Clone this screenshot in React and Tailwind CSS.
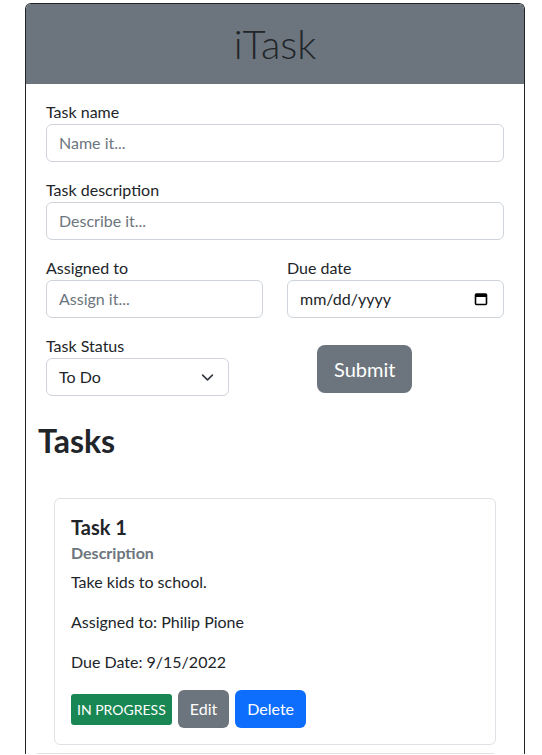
import React from 'react';

const font = { fontFamily: 'Lato, "Noto Sans", sans-serif' };

const Field = ({ label, placeholder }) => (
  <div>
    <label className="block h-[24px] text-[16px] leading-[24px] text-[#212529]">{label}</label>
    <div className="h-[38px] border border-[#ced4da] rounded-[6px] px-[12px] flex items-center text-[16px] text-[#6c757d] bg-white">
      {placeholder}
    </div>
  </div>
);

const App = () => {
  return (
    <div className="h-[755px] overflow-hidden bg-white pt-[3px]" style={font}>
      <div className="ml-[25px] w-[500px] border border-b-0 border-[#212529] rounded-t-[6px] overflow-hidden">
        {/* Header */}
        <div className="h-[80px] bg-[#6c757d] flex items-center justify-center">
          <h1 className="text-[40px] font-light text-[#212529] leading-none">iTask</h1>
        </div>

        {/* Form */}
        <div className="px-[20px] pt-[16px]">
          <div className="mb-[16px]">
            <Field label="Task name" placeholder="Name it..." />
          </div>
          <div className="mb-[16px]">
            <Field label="Task description" placeholder="Describe it..." />
          </div>
          <div className="grid grid-cols-2 gap-x-[24px] mb-[16px]">
            <Field label="Assigned to" placeholder="Assign it..." />
            <div>
              <label className="block h-[24px] text-[16px] leading-[24px] text-[#212529]">Due date</label>
              <div className="h-[38px] border border-[#ced4da] rounded-[6px] pl-[12px] pr-[15px] flex items-center justify-between text-[16px] text-[#212529]">
                <span>mm/dd/yyyy</span>
                <svg width="14" height="14" viewBox="0 0 14 14">
                  <rect x="1.5" y="2" width="11" height="10.5" rx="1" fill="none" stroke="#000" strokeWidth="1.6" />
                  <rect x="1.5" y="2" width="11" height="3" fill="#000" />
                </svg>
              </div>
            </div>
          </div>
          <div className="grid grid-cols-2 gap-x-[24px]">
            <div>
              <label className="block h-[24px] text-[16px] leading-[24px] text-[#212529]">Task Status</label>
              <div className="w-[183px] h-[38px] border border-[#ced4da] rounded-[6px] pl-[12px] pr-[14px] flex items-center justify-between text-[16px] text-[#212529]">
                <span>To Do</span>
                <svg width="13" height="13" viewBox="0 0 16 16">
                  <path d="M2 5l6 6 6-6" fill="none" stroke="#343a40" strokeWidth="2" strokeLinecap="round" strokeLinejoin="round" />
                </svg>
              </div>
            </div>
            <div className="pt-[11px] pl-[30px]">
              <button className="h-[48px] px-[17px] rounded-[8px] bg-[#6c757d] text-white text-[20px]">Submit</button>
            </div>
          </div>
        </div>

        {/* Tasks */}
        <div className="px-[12px] pt-[26px]">
          <h2 className="text-[32px] font-bold leading-[38px] text-[#212529]">Tasks</h2>
          <div className="px-[16px] pt-[38px]">
            <div className="border border-[#dee2e6] rounded-[6px] p-[16px]">
              <h5 className="text-[20px] font-bold leading-[24px] text-[#212529] mb-[8px]">Task 1</h5>
              <h6 className="text-[16px] font-bold leading-[19px] text-[#6c757d] -mt-[4px] mb-[8px]">Description</h6>
              <p className="text-[16px] leading-[24px] text-[#212529] mb-[16px]">Take kids to school.</p>
              <p className="text-[16px] leading-[24px] text-[#212529] mb-[16px]">Assigned to: Philip Pione</p>
              <p className="text-[16px] leading-[24px] text-[#212529] mb-[16px]">Due Date: 9/15/2022</p>
              <div className="flex items-center gap-[6px]">
                <span className="h-[31px] px-[6px] flex items-center rounded-[3px] bg-[#198754] text-white text-[14px]">IN PROGRESS</span>
                <button className="h-[38px] px-[12px] rounded-[6px] bg-[#6c757d] text-white text-[16px]">Edit</button>
                <button className="h-[38px] px-[12px] rounded-[6px] bg-[#0d6efd] text-white text-[16px]">Delete</button>
              </div>
            </div>
          </div>
          <div className="mt-[8px] ml-[-1px] w-[457px] h-px bg-[#dee2e6]" />
        </div>
      </div>
    </div>
  );
};

export default App;
